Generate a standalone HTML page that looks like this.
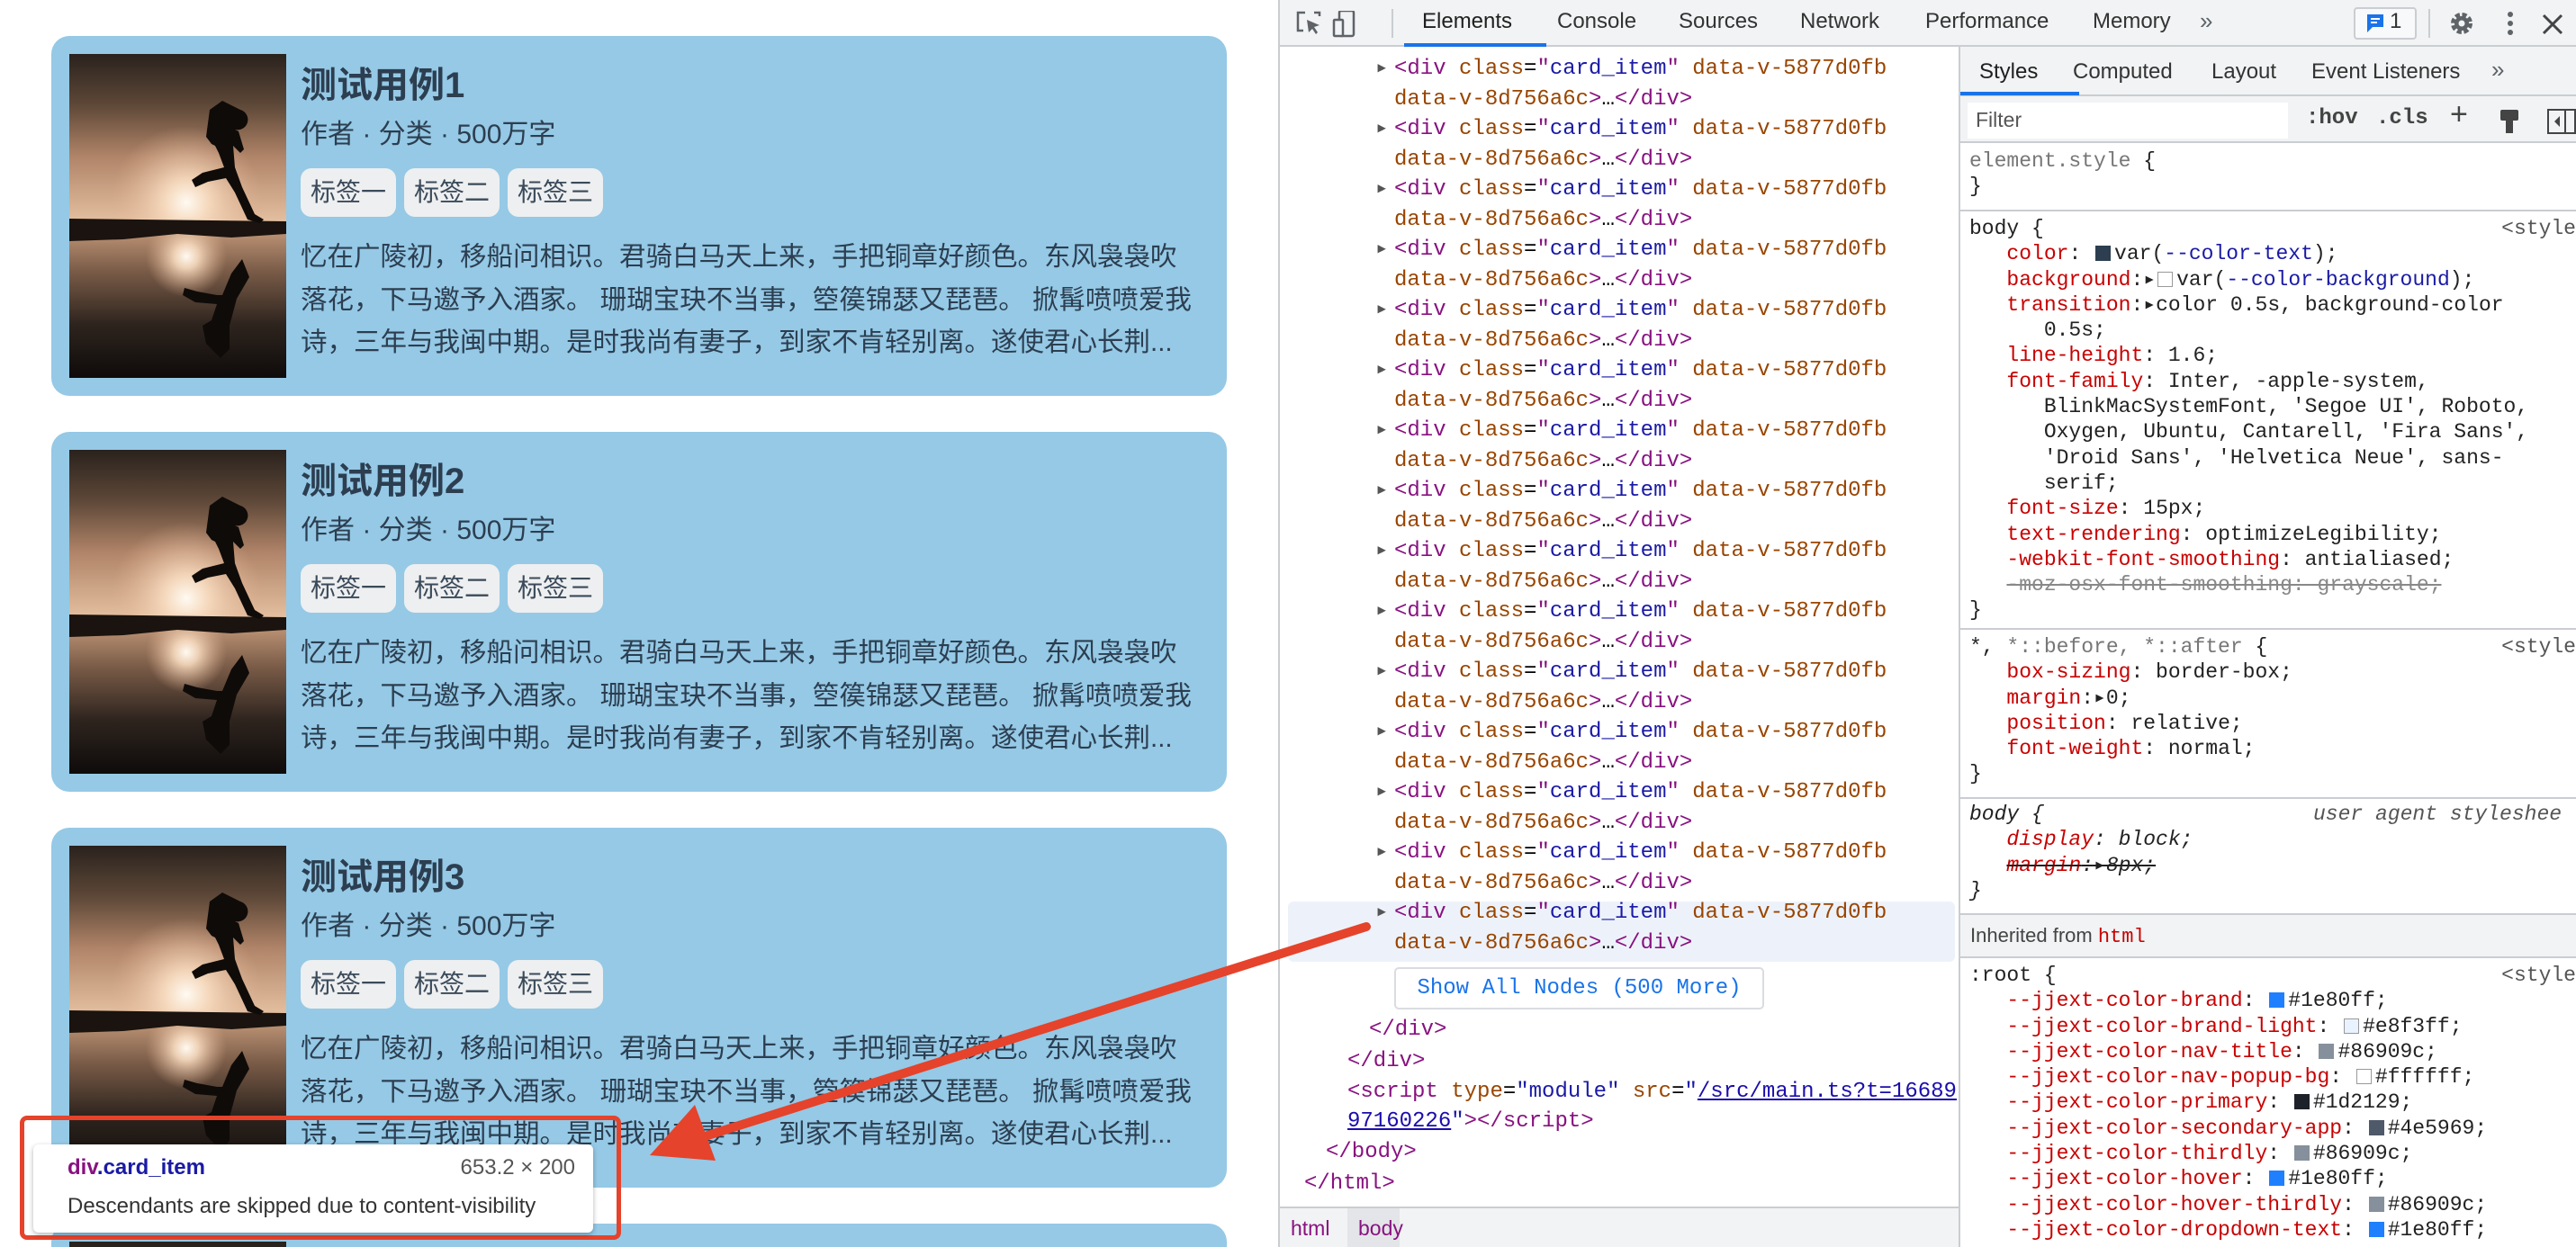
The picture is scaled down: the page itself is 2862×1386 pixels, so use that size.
<!DOCTYPE html>
<html><head><meta charset="utf-8"><style>
*{box-sizing:border-box;margin:0;padding:0}
html{width:2862px;height:1386px;overflow:hidden}
body{width:2862px;height:1386px;overflow:hidden;position:relative;background:#fff;font-family:"Liberation Sans","Noto Sans CJK SC",sans-serif}
.abs{position:absolute;white-space:nowrap}
.card{position:absolute;left:57px;width:1306px;height:400px;background:#95c9e6;border-radius:20px;color:#2c3e50;overflow:hidden}
.card .img{position:absolute;left:20px;top:20px;width:241px;height:360px}
.card .t{position:absolute;left:277px;top:22px;font-size:40px;font-weight:bold;line-height:66px}
.card .m{position:absolute;left:277px;top:90px;font-size:30px;line-height:40px}
.card .tags{position:absolute;left:277px;top:147px;display:flex;gap:9px}
.card .tags span{height:54px;line-height:54px;padding:0 11px;background:#eeeff0;border-radius:12px;font-size:28px;color:#3a4a5a}
.card .d{position:absolute;left:277px;top:222px;font-size:29.5px;line-height:47.5px;white-space:nowrap}
.mono{font-family:"Liberation Mono","DejaVu Sans Mono",monospace}
.dom{font-size:24px;line-height:33.5px}
.tg{color:#881280}.an{color:#994500}.av{color:#1a1aa6}
.st{font-size:23px;line-height:28.3px;color:#222}
.p{color:#c80000}
.sw{display:inline-block;width:17px;height:17px;vertical-align:-2px;margin:0 4px 0 2px;border:1px solid #999}
.tri{display:inline-block;width:21px;color:#555}
</style></head><body>

<svg width="0" height="0" style="position:absolute"><defs>
<linearGradient id="sky" x1="0" y1="0" x2="0" y2="1">
<stop offset="0" stop-color="#2a221d"/><stop offset="0.3" stop-color="#5e4838"/><stop offset="0.6" stop-color="#b08468"/><stop offset="1" stop-color="#e6c2a2"/>
</linearGradient>
<linearGradient id="sea" x1="0" y1="0" x2="0" y2="1">
<stop offset="0" stop-color="#c89c7c"/><stop offset="0.3" stop-color="#7a5c48"/><stop offset="0.65" stop-color="#2e241e"/><stop offset="1" stop-color="#0e0b0a"/>
</linearGradient>
<radialGradient id="sun" cx="0.5" cy="0.5" r="0.5"><stop offset="0" stop-color="#fffaf2"/><stop offset="0.3" stop-color="#f8dcc0" stop-opacity="0.9"/><stop offset="1" stop-color="#e0b090" stop-opacity="0"/></radialGradient>
<g id="pic">
<rect width="241" height="190" fill="url(#sky)"/>
<circle cx="130" cy="165" r="85" fill="url(#sun)"/>
<rect y="190" width="241" height="170" fill="url(#sea)"/>
<circle cx="130" cy="225" r="45" fill="url(#sun)"/>
<path d="M0 183 L241 186 L241 200 L180 204 L120 200 L60 206 L0 208Z" fill="#1a130f"/>
<g fill="#0f0b09">
<path d="M190 62 a10 10 0 1 1 -6 22 l4 2 l6 20 l-4 4 l-8 -8 l2 24 l8 22 l14 30 l10 6 l-4 4 l-14 -4 l-14 -30 l-10 -16 l-20 4 l-14 6 l-4 -8 l12 -8 l24 -6 l-6 -16 l-4 -8 l-4 -2 l-6 -8 l4 -30 l14 -10 z"/>
<path d="M192 228 l-12 16 l-10 24 l-6 0 l-22 -4 l-14 -4 l-2 8 l14 8 l24 2 l-6 18 l-10 6 l4 20 l16 16 l10 -10 l0 -26 l8 -30 l14 -24 z"/>
</g>
</g></defs></svg>

<!-- cards -->
<div class="card" style="top:40px"><svg class="img" viewBox="0 0 241 360"><use href="#pic"/></svg>
<div class="t">测试用例1</div><div class="m">作者 · 分类 · 500万字</div>
<div class="tags"><span>标签一</span><span>标签二</span><span>标签三</span></div>
<div class="d">忆在广陵初，移船问相识。君骑白马天上来，手把铜章好颜色。东风袅袅吹<br>落花，下马邀予入酒家。 珊瑚宝玦不当事，箜篌锦瑟又琵琶。 掀髯喷喷爱我<br>诗，三年与我闽中期。是时我尚有妻子，到家不肯轻别离。遂使君心长荆...</div></div>
<div class="card" style="top:480px"><svg class="img" viewBox="0 0 241 360"><use href="#pic"/></svg>
<div class="t">测试用例2</div><div class="m">作者 · 分类 · 500万字</div>
<div class="tags"><span>标签一</span><span>标签二</span><span>标签三</span></div>
<div class="d">忆在广陵初，移船问相识。君骑白马天上来，手把铜章好颜色。东风袅袅吹<br>落花，下马邀予入酒家。 珊瑚宝玦不当事，箜篌锦瑟又琵琶。 掀髯喷喷爱我<br>诗，三年与我闽中期。是时我尚有妻子，到家不肯轻别离。遂使君心长荆...</div></div>
<div class="card" style="top:920px"><svg class="img" viewBox="0 0 241 360"><use href="#pic"/></svg>
<div class="t">测试用例3</div><div class="m">作者 · 分类 · 500万字</div>
<div class="tags"><span>标签一</span><span>标签二</span><span>标签三</span></div>
<div class="d">忆在广陵初，移船问相识。君骑白马天上来，手把铜章好颜色。东风袅袅吹<br>落花，下马邀予入酒家。 珊瑚宝玦不当事，箜篌锦瑟又琵琶。 掀髯喷喷爱我<br>诗，三年与我闽中期。是时我尚有妻子，到家不肯轻别离。遂使君心长荆...</div></div>
<div class="card" style="top:1360px;height:26px;border-radius:20px 20px 0 0"><div style="position:absolute;left:20px;top:20px;width:241px;height:6px;background:#2a221d"></div></div>

<!-- tooltip -->
<div class="abs" style="left:22px;top:1240px;width:668px;height:138px;border:5px solid #e5432b;border-radius:8px"></div>
<div class="abs" style="left:37px;top:1272px;width:622px;height:98px;background:#fff;border-radius:6px;box-shadow:0 2px 6px rgba(0,0,0,.3)">
<div class="abs" style="left:38px;top:12px;font-size:24px;font-weight:bold"><span style="color:#881280">div</span><span style="color:#1a1aa6">.card_item</span></div>
<div class="abs" style="right:20px;top:12px;font-size:24px;color:#555">653.2 × 200</div>
<div class="abs" style="left:38px;top:55px;font-size:24px;color:#333">Descendants are skipped due to content-visibility</div>
</div>

<!-- devtools -->
<div class="abs" style="left:1420px;top:0;width:1442px;height:1386px;background:#fff;border-left:2px solid #cacdd1"></div>
<div class="abs" style="left:1422px;top:0;width:1440px;height:52px;background:#f1f3f4;border-bottom:2px solid #cacdd1"></div>
<svg class="abs" style="left:1440px;top:12px" width="70" height="30"><path d="M10 2 H2 V22 H8 M20 2 H26 V6" stroke="#5f6368" stroke-width="2.5" fill="none"/><path d="M12 10 L26 16 L20 18 L24 24 L22 26 L18 20 L14 24Z" fill="#5f6368"/><rect x="48" y="0" width="16" height="28" rx="2" stroke="#5f6368" stroke-width="2.5" fill="none"/><rect x="42" y="10" width="10" height="18" rx="1" stroke="#5f6368" stroke-width="2.5" fill="#f1f3f4"/></svg>
<div class="abs" style="left:1546px;top:10px;width:2px;height:32px;background:#cacdd1"></div>
<div class="abs" style="left:1580px;top:10px;font-size:24px;color:#1f1f1f">Elements</div>
<div class="abs" style="left:1560px;top:48px;width:158px;height:4px;background:#1a73e8"></div>
<div class="abs" style="left:1730px;top:10px;font-size:24px;color:#333">Console</div>
<div class="abs" style="left:1865px;top:10px;font-size:24px;color:#333">Sources</div>
<div class="abs" style="left:2000px;top:10px;font-size:24px;color:#333">Network</div>
<div class="abs" style="left:2139px;top:10px;font-size:24px;color:#333">Performance</div>
<div class="abs" style="left:2325px;top:10px;font-size:24px;color:#333">Memory</div>
<div class="abs" style="left:2444px;top:8px;font-size:26px;color:#5f6368">»</div>
<div class="abs" style="left:2615px;top:8px;width:70px;height:36px;border:2px solid #cacdd1;border-radius:4px;background:#f8f9fa"></div>
<svg class="abs" style="left:2628px;top:14px" width="22" height="24"><path d="M2 2 H20 V16 H8 L2 22Z" fill="#1a73e8"/><path d="M6 7 H16 M6 11 H13" stroke="#fff" stroke-width="2"/></svg>
<div class="abs" style="left:2655px;top:10px;font-size:24px;color:#333">1</div>
<div class="abs" style="left:2698px;top:10px;width:2px;height:32px;background:#cacdd1"></div>
<svg class="abs" style="left:2720px;top:11px" width="30" height="30" viewBox="0 0 30 30"><circle cx="15" cy="15" r="9" fill="none" stroke="#5f6368" stroke-width="6" stroke-dasharray="4.7 2.4"/><circle cx="15" cy="15" r="8" fill="#5f6368"/><circle cx="15" cy="15" r="3.5" fill="#f1f3f4"/></svg>
<svg class="abs" style="left:2784px;top:12px" width="10" height="30"><circle cx="5" cy="4" r="3" fill="#5f6368"/><circle cx="5" cy="14" r="3" fill="#5f6368"/><circle cx="5" cy="24" r="3" fill="#5f6368"/></svg>
<svg class="abs" style="left:2824px;top:15px" width="24" height="24"><path d="M2 2 L22 22 M22 2 L2 22" stroke="#444" stroke-width="3"/></svg>

<!-- DOM tree -->
<div class="abs" style="left:2176px;top:52px;width:2px;height:1334px;background:#cacdd1"></div>
<div class="abs" style="left:1431px;top:1002px;width:741px;height:67px;background:#edf2fa;border-radius:6px"></div>
<div class="abs mono dom" style="left:1528px;top:60px">
<div><span class="tri">▸</span><span class="tg">&lt;div</span> <span class="an">class</span>=<span class="tg">"</span><span class="av">card_item</span><span class="tg">"</span> <span class="an">data-v-5877d0fb</span></div><div><span class="tri"></span><span class="an">data-v-8d756a6c</span><span class="tg">&gt;</span>…<span class="tg">&lt;/div&gt;</span></div>
<div><span class="tri">▸</span><span class="tg">&lt;div</span> <span class="an">class</span>=<span class="tg">"</span><span class="av">card_item</span><span class="tg">"</span> <span class="an">data-v-5877d0fb</span></div><div><span class="tri"></span><span class="an">data-v-8d756a6c</span><span class="tg">&gt;</span>…<span class="tg">&lt;/div&gt;</span></div>
<div><span class="tri">▸</span><span class="tg">&lt;div</span> <span class="an">class</span>=<span class="tg">"</span><span class="av">card_item</span><span class="tg">"</span> <span class="an">data-v-5877d0fb</span></div><div><span class="tri"></span><span class="an">data-v-8d756a6c</span><span class="tg">&gt;</span>…<span class="tg">&lt;/div&gt;</span></div>
<div><span class="tri">▸</span><span class="tg">&lt;div</span> <span class="an">class</span>=<span class="tg">"</span><span class="av">card_item</span><span class="tg">"</span> <span class="an">data-v-5877d0fb</span></div><div><span class="tri"></span><span class="an">data-v-8d756a6c</span><span class="tg">&gt;</span>…<span class="tg">&lt;/div&gt;</span></div>
<div><span class="tri">▸</span><span class="tg">&lt;div</span> <span class="an">class</span>=<span class="tg">"</span><span class="av">card_item</span><span class="tg">"</span> <span class="an">data-v-5877d0fb</span></div><div><span class="tri"></span><span class="an">data-v-8d756a6c</span><span class="tg">&gt;</span>…<span class="tg">&lt;/div&gt;</span></div>
<div><span class="tri">▸</span><span class="tg">&lt;div</span> <span class="an">class</span>=<span class="tg">"</span><span class="av">card_item</span><span class="tg">"</span> <span class="an">data-v-5877d0fb</span></div><div><span class="tri"></span><span class="an">data-v-8d756a6c</span><span class="tg">&gt;</span>…<span class="tg">&lt;/div&gt;</span></div>
<div><span class="tri">▸</span><span class="tg">&lt;div</span> <span class="an">class</span>=<span class="tg">"</span><span class="av">card_item</span><span class="tg">"</span> <span class="an">data-v-5877d0fb</span></div><div><span class="tri"></span><span class="an">data-v-8d756a6c</span><span class="tg">&gt;</span>…<span class="tg">&lt;/div&gt;</span></div>
<div><span class="tri">▸</span><span class="tg">&lt;div</span> <span class="an">class</span>=<span class="tg">"</span><span class="av">card_item</span><span class="tg">"</span> <span class="an">data-v-5877d0fb</span></div><div><span class="tri"></span><span class="an">data-v-8d756a6c</span><span class="tg">&gt;</span>…<span class="tg">&lt;/div&gt;</span></div>
<div><span class="tri">▸</span><span class="tg">&lt;div</span> <span class="an">class</span>=<span class="tg">"</span><span class="av">card_item</span><span class="tg">"</span> <span class="an">data-v-5877d0fb</span></div><div><span class="tri"></span><span class="an">data-v-8d756a6c</span><span class="tg">&gt;</span>…<span class="tg">&lt;/div&gt;</span></div>
<div><span class="tri">▸</span><span class="tg">&lt;div</span> <span class="an">class</span>=<span class="tg">"</span><span class="av">card_item</span><span class="tg">"</span> <span class="an">data-v-5877d0fb</span></div><div><span class="tri"></span><span class="an">data-v-8d756a6c</span><span class="tg">&gt;</span>…<span class="tg">&lt;/div&gt;</span></div>
<div><span class="tri">▸</span><span class="tg">&lt;div</span> <span class="an">class</span>=<span class="tg">"</span><span class="av">card_item</span><span class="tg">"</span> <span class="an">data-v-5877d0fb</span></div><div><span class="tri"></span><span class="an">data-v-8d756a6c</span><span class="tg">&gt;</span>…<span class="tg">&lt;/div&gt;</span></div>
<div><span class="tri">▸</span><span class="tg">&lt;div</span> <span class="an">class</span>=<span class="tg">"</span><span class="av">card_item</span><span class="tg">"</span> <span class="an">data-v-5877d0fb</span></div><div><span class="tri"></span><span class="an">data-v-8d756a6c</span><span class="tg">&gt;</span>…<span class="tg">&lt;/div&gt;</span></div>
<div><span class="tri">▸</span><span class="tg">&lt;div</span> <span class="an">class</span>=<span class="tg">"</span><span class="av">card_item</span><span class="tg">"</span> <span class="an">data-v-5877d0fb</span></div><div><span class="tri"></span><span class="an">data-v-8d756a6c</span><span class="tg">&gt;</span>…<span class="tg">&lt;/div&gt;</span></div>
<div><span class="tri">▸</span><span class="tg">&lt;div</span> <span class="an">class</span>=<span class="tg">"</span><span class="av">card_item</span><span class="tg">"</span> <span class="an">data-v-5877d0fb</span></div><div><span class="tri"></span><span class="an">data-v-8d756a6c</span><span class="tg">&gt;</span>…<span class="tg">&lt;/div&gt;</span></div>
<div><span class="tri">▸</span><span class="tg">&lt;div</span> <span class="an">class</span>=<span class="tg">"</span><span class="av">card_item</span><span class="tg">"</span> <span class="an">data-v-5877d0fb</span></div><div><span class="tri"></span><span class="an">data-v-8d756a6c</span><span class="tg">&gt;</span>…<span class="tg">&lt;/div&gt;</span></div>
</div>
<div class="abs mono" style="left:1549px;top:1075px;width:411px;height:47px;border:2px solid #dadce0;border-radius:5px;font-size:24px;line-height:43px;color:#1a73e8;text-align:center">Show All Nodes (500 More)</div>
<div class="abs mono dom" style="left:1521px;top:1128px"><span class="tg">&lt;/div&gt;</span></div>
<div class="abs mono dom" style="left:1497px;top:1163px"><span class="tg">&lt;/div&gt;</span></div>
<div class="abs mono dom" style="left:1497px;top:1197px"><span class="tg">&lt;script</span> <span class="an">type</span>=<span class="av">"module"</span> <span class="an">src</span>=<span class="av">"</span><span style="color:#1a0dab;text-decoration:underline">/src/main.ts?t=16689</span></div>
<div class="abs mono dom" style="left:1497px;top:1230px"><span style="color:#1a0dab;text-decoration:underline">97160226</span><span class="av">"</span><span class="tg">&gt;&lt;/script&gt;</span></div>
<div class="abs mono dom" style="left:1473px;top:1264px"><span class="tg">&lt;/body&gt;</span></div>
<div class="abs mono dom" style="left:1449px;top:1299px"><span class="tg">&lt;/html&gt;</span></div>
<div class="abs" style="left:1422px;top:1341px;width:754px;height:45px;background:#f1f3f4;border-top:2px solid #cacdd1"></div>
<div class="abs" style="left:1497px;top:1343px;width:58px;height:43px;background:#e3e5e8"></div>
<div class="abs" style="left:1434px;top:1352px;font-size:23px;color:#881280">html</div>
<div class="abs" style="left:1509px;top:1352px;font-size:23px;color:#881280">body</div>

<!-- styles pane -->
<div class="abs" style="left:2178px;top:52px;width:684px;height:106px;background:#f1f3f4"></div>
<div class="abs" style="left:2178px;top:105px;width:684px;height:2px;background:#cacdd1"></div>
<div class="abs" style="left:2199px;top:66px;font-size:24px;color:#1f1f1f">Styles</div>
<div class="abs" style="left:2178px;top:102px;width:132px;height:4px;background:#1a73e8"></div>
<div class="abs" style="left:2303px;top:66px;font-size:24px;color:#333">Computed</div>
<div class="abs" style="left:2457px;top:66px;font-size:24px;color:#333">Layout</div>
<div class="abs" style="left:2568px;top:66px;font-size:24px;color:#333">Event Listeners</div>
<div class="abs" style="left:2768px;top:62px;font-size:26px;color:#5f6368">»</div>
<div class="abs" style="left:2186px;top:114px;width:356px;height:40px;background:#fff"></div>
<div class="abs" style="left:2195px;top:120px;font-size:23px;color:#555">Filter</div>
<div class="abs mono" style="left:2562px;top:118px;font-size:24px;font-weight:bold;color:#444">:hov</div>
<div class="abs mono" style="left:2640px;top:118px;font-size:24px;font-weight:bold;color:#444">.cls</div>
<div class="abs" style="left:2722px;top:108px;font-size:34px;color:#444">+</div>
<svg class="abs" style="left:2776px;top:120px" width="24" height="30"><rect x="2" y="2" width="20" height="12" rx="2" fill="#444"/><rect x="8" y="14" width="8" height="14" fill="#444"/></svg>
<svg class="abs" style="left:2830px;top:121px" width="32" height="28"><rect x="1" y="1" width="30" height="26" fill="none" stroke="#444" stroke-width="2"/><path d="M14 8 L8 14 L14 20Z" fill="#444"/><path d="M20 1 V27" stroke="#444" stroke-width="2"/></svg>
<div class="abs" style="left:2178px;top:157px;width:684px;height:2px;background:#cacdd1"></div>

<div class="abs mono st" style="left:2188px;top:165px"><span style="color:#777">element.style</span> {<br>}</div>
<div class="abs" style="left:2178px;top:233px;width:684px;height:2px;background:#cacdd1"></div>
<div class="abs mono st" style="left:2188px;top:240px;width:674px">body {<span style="position:absolute;right:0;color:#555">&lt;style</span><br>
&nbsp;&nbsp;&nbsp;<span class="p">color</span>: <span class="sw" style="background:#2c3e50;border-color:#2c3e50"></span>var(<span style="color:#1a1aa6">--color-text</span>);<br>
&nbsp;&nbsp;&nbsp;<span class="p">background</span>:▸<span class="sw" style="background:#fff"></span>var(<span style="color:#1a1aa6">--color-background</span>);<br>
&nbsp;&nbsp;&nbsp;<span class="p">transition</span>:▸color 0.5s, background-color<br>
&nbsp;&nbsp;&nbsp;&nbsp;&nbsp;&nbsp;0.5s;<br>
&nbsp;&nbsp;&nbsp;<span class="p">line-height</span>: 1.6;<br>
&nbsp;&nbsp;&nbsp;<span class="p">font-family</span>: Inter, -apple-system,<br>
&nbsp;&nbsp;&nbsp;&nbsp;&nbsp;&nbsp;BlinkMacSystemFont, 'Segoe UI', Roboto,<br>
&nbsp;&nbsp;&nbsp;&nbsp;&nbsp;&nbsp;Oxygen, Ubuntu, Cantarell, 'Fira Sans',<br>
&nbsp;&nbsp;&nbsp;&nbsp;&nbsp;&nbsp;'Droid Sans', 'Helvetica Neue', sans-<br>
&nbsp;&nbsp;&nbsp;&nbsp;&nbsp;&nbsp;serif;<br>
&nbsp;&nbsp;&nbsp;<span class="p">font-size</span>: 15px;<br>
&nbsp;&nbsp;&nbsp;<span class="p">text-rendering</span>: optimizeLegibility;<br>
&nbsp;&nbsp;&nbsp;<span class="p">-webkit-font-smoothing</span>: antialiased;<br>
&nbsp;&nbsp;&nbsp;<span style="text-decoration:line-through;color:#888">-moz-osx-font-smoothing: grayscale;</span><br>
}</div>
<div class="abs" style="left:2178px;top:698px;width:684px;height:2px;background:#cacdd1"></div>
<div class="abs mono st" style="left:2188px;top:705px;width:674px">*, <span style="color:#777">*::before, *::after</span> {<span style="position:absolute;right:0;color:#555">&lt;style</span><br>
&nbsp;&nbsp;&nbsp;<span class="p">box-sizing</span>: border-box;<br>
&nbsp;&nbsp;&nbsp;<span class="p">margin</span>:▸0;<br>
&nbsp;&nbsp;&nbsp;<span class="p">position</span>: relative;<br>
&nbsp;&nbsp;&nbsp;<span class="p">font-weight</span>: normal;<br>
}</div>
<div class="abs" style="left:2178px;top:886px;width:684px;height:2px;background:#cacdd1"></div>
<div class="abs mono st" style="left:2188px;top:891px;width:674px;font-style:italic">body {<span style="position:absolute;left:382px;color:#555">user agent styleshee</span><br>
&nbsp;&nbsp;&nbsp;<span class="p">display</span>: block;<br>
&nbsp;&nbsp;&nbsp;<span style="text-decoration:line-through"><span class="p">margin</span>:▸8px;</span><br>
}</div>
<div class="abs" style="left:2178px;top:1015px;width:684px;height:50px;background:#f1f3f4;border-top:2px solid #cacdd1;border-bottom:2px solid #cacdd1"></div>
<div class="abs" style="left:2189px;top:1027px;font-size:22px;color:#444">Inherited from <span class="mono" style="color:#c80000">html</span></div>
<div class="abs mono st" style="left:2188px;top:1070px;width:674px;height:316px;overflow:hidden">:root {<span style="position:absolute;right:0;top:0;color:#555">&lt;style</span><br>
&nbsp;&nbsp;&nbsp;<span class="p">--jjext-color-brand</span>: <span class="sw" style="background:#1e80ff;border-color:#1e80ff"></span>#1e80ff;<br>
&nbsp;&nbsp;&nbsp;<span class="p">--jjext-color-brand-light</span>: <span class="sw" style="background:#e8f3ff"></span>#e8f3ff;<br>
&nbsp;&nbsp;&nbsp;<span class="p">--jjext-color-nav-title</span>: <span class="sw" style="background:#86909c;border-color:#86909c"></span>#86909c;<br>
&nbsp;&nbsp;&nbsp;<span class="p">--jjext-color-nav-popup-bg</span>: <span class="sw" style="background:#fff"></span>#ffffff;<br>
&nbsp;&nbsp;&nbsp;<span class="p">--jjext-color-primary</span>: <span class="sw" style="background:#1d2129;border-color:#1d2129"></span>#1d2129;<br>
&nbsp;&nbsp;&nbsp;<span class="p">--jjext-color-secondary-app</span>: <span class="sw" style="background:#4e5969;border-color:#4e5969"></span>#4e5969;<br>
&nbsp;&nbsp;&nbsp;<span class="p">--jjext-color-thirdly</span>: <span class="sw" style="background:#86909c;border-color:#86909c"></span>#86909c;<br>
&nbsp;&nbsp;&nbsp;<span class="p">--jjext-color-hover</span>: <span class="sw" style="background:#1e80ff;border-color:#1e80ff"></span>#1e80ff;<br>
&nbsp;&nbsp;&nbsp;<span class="p">--jjext-color-hover-thirdly</span>: <span class="sw" style="background:#86909c;border-color:#86909c"></span>#86909c;<br>
&nbsp;&nbsp;&nbsp;<span class="p">--jjext-color-dropdown-text</span>: <span class="sw" style="background:#1e80ff;border-color:#1e80ff"></span>#1e80ff;
</div>

<!-- annotation arrow (on top) -->
<svg class="abs" style="left:0;top:0" width="2862" height="1386">
<line x1="1518" y1="1030" x2="780" y2="1264" stroke="#e5432b" stroke-width="10" stroke-linecap="round"/>
<polygon points="722,1284 772,1228 795,1290" fill="#e5432b"/>
</svg>
</body></html>
